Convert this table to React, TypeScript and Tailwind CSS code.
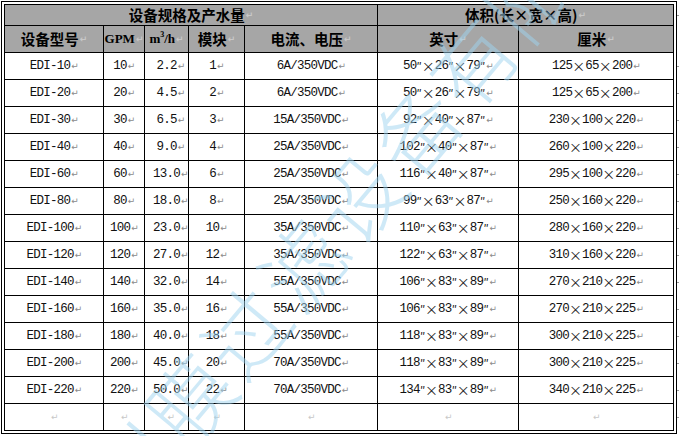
import React from "react";

const rows: string[][] = [
  ["EDI-10", "10", "2.2", "1", "6A/350VDC", "50″×26″×79″", "125×65×200"],
  ["EDI-20", "20", "4.5", "2", "6A/350VDC", "50″×26″×79″", "125×65×200"],
  ["EDI-30", "30", "6.5", "3", "15A/350VDC", "92″×40″×87″", "230×100×220"],
  ["EDI-40", "40", "9.0", "4", "25A/350VDC", "102″×40″×87″", "260×100×220"],
  ["EDI-60", "60", "13.0", "6", "25A/350VDC", "116″×40″×87″", "295×100×220"],
  ["EDI-80", "80", "18.0", "8", "25A/350VDC", "99″×63″×87″", "250×160×220"],
  ["EDI-100", "100", "23.0", "10", "35A/350VDC", "110″×63″×87″", "280×160×220"],
  ["EDI-120", "120", "27.0", "12", "35A/350VDC", "122″×63″×87″", "310×160×220"],
  ["EDI-140", "140", "32.0", "14", "55A/350VDC", "106″×83″×89″", "270×210×225"],
  ["EDI-160", "160", "35.0", "16", "55A/350VDC", "106″×83″×89″", "270×210×225"],
  ["EDI-180", "180", "40.0", "18", "55A/350VDC", "118″×83″×89″", "300×210×225"],
  ["EDI-200", "200", "45.0", "20", "70A/350VDC", "118″×83″×89″", "300×210×225"],
  ["EDI-220", "220", "50.0", "22", "70A/350VDC", "134″×83″×89″", "340×210×225"],
  ["", "", "", "", "", "", ""],
];

const Mark = ({ light }: { light?: boolean }) => (
  <span
    className={`text-[9px] leading-none ml-px ${light ? "text-[#c8c8c8]" : "text-[#8a8a8a]"}`}
    style={{ fontFamily: '"DejaVu Sans", sans-serif' }}
  >
    ↵
  </span>
);

const Dim = ({ s }: { s: string }) => {
  const parts = s.split(/(×|″)/).filter((p) => p !== "");
  return (
    <>
      {parts.map((p, i) =>
        p === "×" ? (
          <span key={i} className="text-[13px] tracking-normal font-['Noto_Sans_CJK_SC',sans-serif] text-[#222]">
            ×
          </span>
        ) : p === "″" ? (
          <span key={i} className="text-[11px] tracking-normal font-['Noto_Sans_CJK_SC',sans-serif]">
            ″
          </span>
        ) : (
          <span key={i}>{p}</span>
        )
      )}
    </>
  );
};

const hdrBase = "bg-[#a6a6a6] flex items-center justify-center text-black font-bold whitespace-nowrap";
const hdrCjk = `${hdrBase} text-[14.5px] font-['Noto_Sans_CJK_SC',sans-serif]`;
const hdrSerif = `${hdrBase} text-[13px] font-['Liberation_Serif','Noto_Sans_CJK_SC',serif]`;
const cell =
  "bg-white flex items-center justify-center text-[12.5px] tracking-[-0.75px] text-[#111] font-['Liberation_Mono','Noto_Sans_CJK_SC',monospace] whitespace-nowrap overflow-hidden";

const Tick = () => <div className="w-[2px] h-px bg-[#9a9a9a]" />;

export default function App() {
  return (
    <div className="relative w-[679px] h-[436px] bg-white overflow-hidden pt-px pl-px flex">
      <div className="w-[676px] shrink-0 border border-black p-[2px] self-start">
        <div className="grid grid-cols-[98px_40px_43px_55px_132px_140px_154px] grid-rows-[20px_26px_repeat(14,26px)] gap-px bg-black border border-black">
          <div className={`${hdrCjk} col-span-5`}>
            设备规格及产水量<Mark light />
          </div>
          <div className={`${hdrCjk} col-span-2`}>
            体积(长×宽×高)<Mark light />
          </div>
          <div className={hdrCjk}>
            设备型号<Mark light />
          </div>
          <div className={hdrSerif}>
            GPM<Mark light />
          </div>
          <div className={hdrSerif}>
            m<sup className="text-[8px]">3</sup>/h<Mark light />
          </div>
          <div className={hdrCjk}>
            模块<Mark light />
          </div>
          <div className={hdrCjk}>
            电流、电压<Mark light />
          </div>
          <div className={hdrCjk}>
            英寸<Mark light />
          </div>
          <div className={hdrCjk}>
            厘米<Mark light />
          </div>
          {rows.map((r, ri) =>
            r.map((v, ci) => (
              <div key={`${ri}-${ci}`} className={`${cell} ${ci === 2 ? "pl-[8px]" : ""}`}>
                {ci >= 5 ? <Dim s={v} /> : v}
                <Mark light={ri === rows.length - 1} />
              </div>
            ))
          )}
        </div>
      </div>
      <div className="w-[2px] shrink-0 flex flex-col pt-[4px]">
        <div className="h-[21px] flex items-center">
          <Tick />
        </div>
        <div className="h-[27px]" />
        {rows.map((_, i) => (
          <div key={i} className="h-[27px] flex items-center">
            <Tick />
          </div>
        ))}
      </div>
      <div className="pointer-events-none absolute inset-0 flex items-center justify-center">
        <div className="whitespace-nowrap text-[84px] font-light tracking-[4px] text-[#9fd4f0] opacity-50 font-['Noto_Sans_CJK_SC',sans-serif] -rotate-[50deg] -translate-x-[10px] translate-y-[10px]">
          川膜过滤设备有限
        </div>
      </div>
    </div>
  );
}
